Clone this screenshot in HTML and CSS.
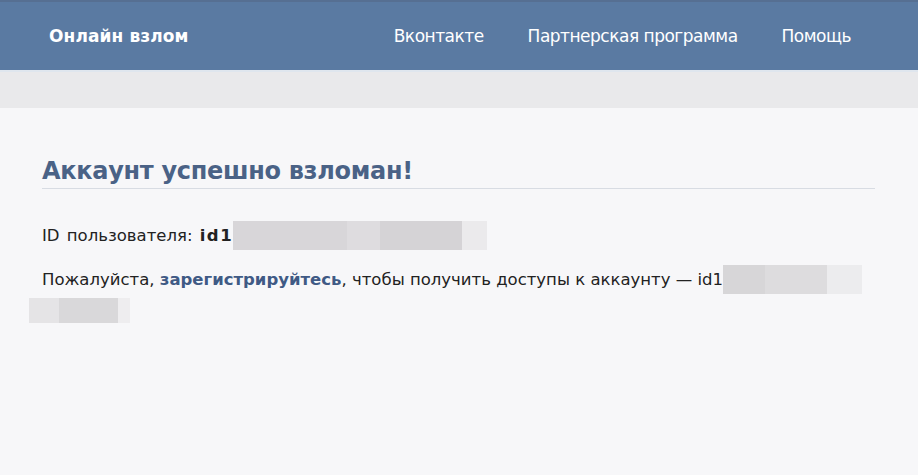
FILE: index.html
```html
<!DOCTYPE html>
<html lang="ru">
<head>
<meta charset="utf-8">
<link rel="stylesheet" href="styles.css">
</head>
<body>
<header class="topbar">
  <div class="brand">Онлайн взлом</div>
  <nav class="nav">
    <a class="nav-link">Вконтакте</a>
    <a class="nav-link">Партнерская программа</a>
    <a class="nav-link">Помощь</a>
  </nav>
</header>
<div class="strip"></div>
<main class="content">
  <h1 class="title">Аккаунт успешно взломан!</h1>
  <p class="line line-first">ID пользователя: <b class="id">id1</b><span class="blur blur-a"></span></p>
  <p class="line line-second">Пожалуйста, <a class="reg">зарегистрируйтесь</a>, чтобы получить доступы к аккаунту — id1<span class="blur blur-b"></span></p>
  <div class="blur blur-c"></div>
</main>
</body>
</html>
```
FILE: styles.css
```css
html, body {
  margin: 0;
  padding: 0;
  background: #f7f7f9;
  font-family: "DejaVu Sans", Verdana, sans-serif;
}
.topbar {
  background: #5a7aa2;
  border-top: 2px solid #566f92;
  border-bottom: 2px solid #dfe6ee;
  display: flex;
  align-items: center;
  justify-content: space-between;
  padding: 0 67px 0 49px;
  height: 68px;
}
.brand {
  color: #fff;
  font-weight: bold;
  font-size: 17px;
  letter-spacing: 0.1px;
}
.nav {
  display: flex;
  gap: 44px;
}
.nav-link {
  color: #fff;
  font-size: 17px;
  letter-spacing: -0.5px;
}
.strip {
  height: 36px;
  background: #e9e9eb;
}
.content {
  padding: 49px 42px 0 42px;
}
.title {
  margin: 0;
  font-size: 24px;
  font-weight: bold;
  color: #4a6286;
  letter-spacing: -0.3px;
  padding-bottom: 3px;
  border-bottom: 1px solid #d8dce3;
  width: 833px;
}
.line {
  margin: 0;
  font-size: 16.5px;
  line-height: 29px;
  height: 29px;
  color: #222;
  white-space: nowrap;
}
.line-first { margin-top: 32px; word-spacing: 2px; }
.line-second { margin-top: 15px; }
.id { font-weight: bold; letter-spacing: 1.5px; }
.reg { color: #3f5a85; font-weight: bold; }
.blur {
  display: inline-block;
  height: 29px;
  vertical-align: top;
}
.blur-a {
  width: 254px;
  background: linear-gradient(90deg, #d8d6d9 0 45%, #dedcdf 45% 58%, #d5d3d6 58% 90%, #ebeaec 90%);
}
.blur-b {
  width: 139px;
  background: linear-gradient(90deg, #d7d6d8 0 30%, #dddcde 30% 75%, #ececee 75%);
}
.blur-c {
  display: block;
  width: 101px;
  height: 25px;
  margin-left: -13px;
  margin-top: 4px;
  background: linear-gradient(90deg, #e5e4e6 0 30%, #d9d8da 30% 88%, #eeedef 88%);
}
```
